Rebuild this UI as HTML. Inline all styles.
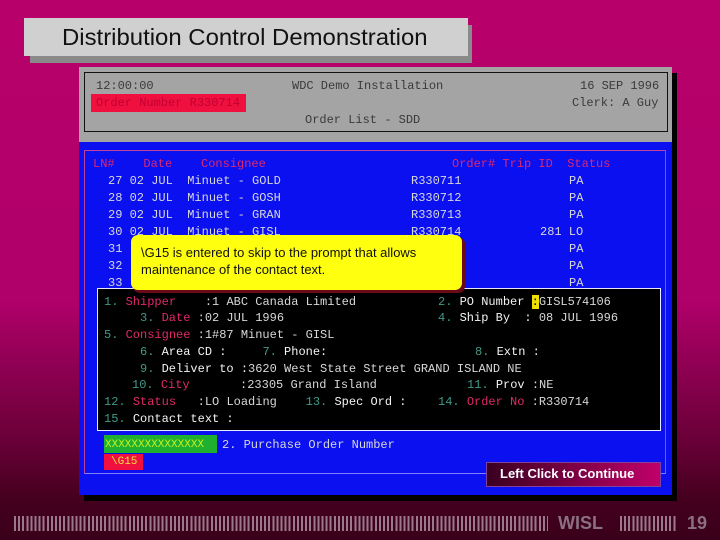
<!DOCTYPE html>
<html><head><style>
*{margin:0;padding:0}
body{width:720px;height:540px;overflow:hidden;position:relative;background:linear-gradient(#b8006a 0px,#b0006a 300px,#6a0038 440px,#44001e 500px,#3a001a 540px);font-family:"Liberation Mono",monospace;}
.a{position:absolute;white-space:pre;font-size:12px;line-height:14px}
.g{color:#3a3a3a}
.w{color:#d8d8d8}
.r{color:#e0286a}
.t{color:#3f9a8a}
.wh{color:#f4f4f4}
.s{font-family:"Liberation Sans",sans-serif}
</style></head><body>
<div style="position:absolute;left:30px;top:25px;width:442px;height:38px;background:#8a8a8a"></div>
<div style="position:absolute;left:24px;top:18px;width:444px;height:38px;background:#d0d0d0"></div>
<div class="a s" style="left:62px;top:23px;font-size:23px;line-height:28px;color:#111;transform:scaleX(1.04);transform-origin:left">Distribution Control Demonstration</div>

<div style="position:absolute;left:84px;top:73px;width:593px;height:428px;background:#000"></div>
<div style="position:absolute;left:79px;top:67px;width:593px;height:428px;background:#0a10f0"></div>
<div style="position:absolute;left:79px;top:67px;width:593px;height:75px;background:#a4a4a4"></div>
<div style="position:absolute;left:84px;top:72px;width:582px;height:58px;border:1px solid #111"></div>
<div style="position:absolute;left:84px;top:150px;width:580px;height:322px;border:1px solid #c040a0;border-bottom-color:#8080ff"></div>

<div class="a g" style="left:96px;top:79px">12:00:00</div>
<div class="a g" style="left:292px;top:79px">WDC Demo Installation</div>
<div class="a g" style="left:580px;top:79px">16 SEP 1996</div>
<div style="position:absolute;left:91px;top:94px;width:155px;height:18px;background:#f01040"></div>
<div class="a" style="left:96px;top:96px;color:#c00030">Order Number R330714</div>
<div class="a g" style="left:572px;top:96px">Clerk: A Guy</div>
<div class="a g" style="left:305px;top:113px">Order List - SDD</div>

<div class="a r" style="left:93px;top:157px">LN#    Date    Consignee</div>
<div class="a r" style="left:452px;top:157px">Order# Trip ID  Status</div>
<div class="a w" style="left:108px;top:174px">27 02 JUL  Minuet - GOLD</div>
<div class="a w" style="left:108px;top:191px">28 02 JUL  Minuet - GOSH</div>
<div class="a w" style="left:108px;top:208px">29 02 JUL  Minuet - GRAN</div>
<div class="a w" style="left:108px;top:225px">30 02 JUL  Minuet - GISL</div>
<div class="a w" style="left:108px;top:242px">31</div>
<div class="a w" style="left:108px;top:259px">32</div>
<div class="a w" style="left:108px;top:276px">33</div>
<div class="a w" style="left:411px;top:174px">R330711</div>
<div class="a w" style="left:411px;top:191px">R330712</div>
<div class="a w" style="left:411px;top:208px">R330713</div>
<div class="a w" style="left:411px;top:225px">R330714</div>
<div class="a w" style="left:540px;top:225px">281 LO</div>
<div class="a w" style="left:569px;top:174px">PA</div>
<div class="a w" style="left:569px;top:191px">PA</div>
<div class="a w" style="left:569px;top:208px">PA</div>
<div class="a w" style="left:569px;top:242px">PA</div>
<div class="a w" style="left:569px;top:259px">PA</div>
<div class="a w" style="left:569px;top:276px">PA</div>

<div style="position:absolute;left:97px;top:288px;width:562px;height:141px;background:#000;border:1px solid #e8e8ff"></div>
<div class="a" style="left:104px;top:295px"><span class="t">1. </span><span class="r">Shipper</span><span class="w">    :1 ABC Canada Limited</span></div>
<div class="a" style="left:438px;top:295px"><span class="t">2. </span><span class="wh">PO Number </span><span style="background:#f0e000;color:#000">:</span><span class="w">GISL574106</span></div>
<div class="a" style="left:140px;top:311px"><span class="t">3. </span><span class="r">Date</span><span class="w"> :02 JUL 1996</span></div>
<div class="a" style="left:438px;top:311px"><span class="t">4. </span><span class="wh">Ship By  : </span><span class="w">08 JUL 1996</span></div>
<div class="a" style="left:104px;top:328px"><span class="t">5. </span><span class="r">Consignee</span><span class="w"> :1#87 Minuet - GISL</span></div>
<div class="a" style="left:140px;top:345px"><span class="t">6. </span><span class="wh">Area CD :     </span><span class="t">7. </span><span class="wh">Phone:</span></div>
<div class="a" style="left:475px;top:345px"><span class="t">8. </span><span class="wh">Extn :</span></div>
<div class="a" style="left:140px;top:362px"><span class="t">9. </span><span class="wh">Deliver to :</span><span class="w">3620 West State Street GRAND ISLAND NE</span></div>
<div class="a" style="left:132px;top:378px"><span class="t">10. </span><span class="r">City</span><span class="w">       :23305 Grand Island</span></div>
<div class="a" style="left:467px;top:378px"><span class="t">11. </span><span class="wh">Prov </span><span class="w">:NE</span></div>
<div class="a" style="left:104px;top:395px"><span class="t">12. </span><span class="r">Status</span><span class="w">   :LO Loading    </span><span class="t">13. </span><span class="wh">Spec Ord :</span></div>
<div class="a" style="left:438px;top:395px"><span class="t">14. </span><span class="r">Order No</span><span class="w"> :R330714</span></div>
<div class="a" style="left:104px;top:412px"><span class="t">15. </span><span class="wh">Contact text :</span></div>

<div style="position:absolute;left:104px;top:435px;width:113px;height:18px;background:#20b030"></div>
<div class="a" style="left:105px;top:438px;color:#c0f020;font-size:11px">XXXXXXXXXXXXXXX</div>
<div class="a w" style="left:222px;top:438px">2. Purchase Order Number</div>
<div style="position:absolute;left:104px;top:454px;width:39px;height:16px;background:#f01040"></div>
<div class="a" style="left:111px;top:455px;color:#f0e040;font-size:11px">\G15</div>

<div style="position:absolute;left:486px;top:462px;width:173px;height:23px;background:linear-gradient(90deg,#3a0020,#c0006a);border:1px solid #8040a0"></div>
<div class="a s" style="left:500px;top:466px;font-size:13px;line-height:16px;font-weight:bold;color:#fff">Left Click to Continue</div>

<div style="position:absolute;left:133px;top:237px;width:332px;height:56px;background:#6a0a14;border-radius:7px"></div>
<div style="position:absolute;left:131px;top:235px;width:331px;height:55px;background:#ffff10;border-radius:7px"></div>
<div class="a s" style="left:141px;top:244px;font-size:13px;line-height:17px;color:#111">\G15 is entered to skip to the prompt that allows
maintenance of the contact text.</div>

<div style="position:absolute;left:14px;top:516px;width:534px;height:15px;background:repeating-linear-gradient(90deg,#9a7a8a 0 2px,transparent 2px 4.1px)"></div>
<div class="a s" style="left:558px;top:512px;font-size:18px;line-height:22px;font-weight:bold;color:#8a7080">WISL</div>
<div style="position:absolute;left:620px;top:516px;width:56px;height:15px;background:repeating-linear-gradient(90deg,#9a7a8a 0 2px,transparent 2px 4.1px)"></div>
<div class="a s" style="left:687px;top:512px;font-size:18px;line-height:22px;font-weight:bold;color:#8a7080">19</div>
</body></html>
